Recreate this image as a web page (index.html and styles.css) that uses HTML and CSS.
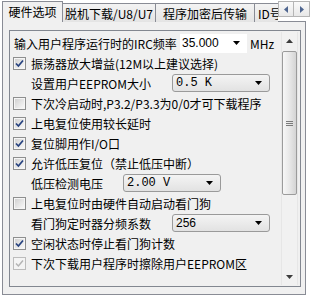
FILE: index.html
```html
<!DOCTYPE html>
<html lang="zh-CN">
<head>
    <meta charset="UTF-8">
    <title>硬件选项</title>
    <link rel="stylesheet" href="styles.css">
</head>
<body>
    <div class="tabstrip">
        <div class="tabs">
            <div class="tab tab-active">硬件选项</div>
            <div class="tab tab-2">脱机下载/U8/U7</div>
            <div class="tab tab-3">程序加密后传输</div>
            <div class="tab tab-4">ID号</div>
        </div>
        <div class="tab-scroll">
            <span class="tab-btn"><svg width="4" height="7" viewBox="0 0 4 7"><path d="M4 0 L0 3.5 L4 7 Z" fill="#4f6690"/></svg></span>
            <span class="tab-btn"><svg width="4" height="7" viewBox="0 0 4 7"><path d="M0 0 L4 3.5 L0 7 Z" fill="#4f6690"/></svg></span>
        </div>
    </div>

    <div class="page">
        <div class="group">
            <div class="options">
                <div class="row">
                    <span class="label-irc">输入用户程序运行时的IRC频率</span>
                    <div class="combo combo-edit">
                        <span class="combo-value">35.000</span>
                        <svg class="combo-arrow" width="7" height="4" viewBox="0 0 7 4"><path d="M0 0 H7 L3.5 4 Z" fill="#000"/></svg>
                    </div>
                    <span class="unit">MHz</span>
                </div>
                <div class="row">
                    <span class="check"><svg width="9" height="9" viewBox="0 0 9 9"><path d="M1 4.5 L3.4 7 L8 1.5" fill="none" stroke="#26427f" stroke-width="1.7"/></svg></span>
                    <span>振荡器放大增益(12M以上建议选择)</span>
                </div>
                <div class="row indent">
                    <span class="field-label">设置用户EEPROM大小</span>
                    <div class="combo combo-list">
                        <span class="combo-value mono">0.5 K</span>
                        <svg class="combo-arrow" width="7" height="4" viewBox="0 0 7 4"><path d="M0 0 H7 L3.5 4 Z" fill="#000"/></svg>
                    </div>
                </div>
                <div class="row">
                    <span class="check"></span>
                    <span>下次冷启动时,P3.2/P3.3为0/0才可下载程序</span>
                </div>
                <div class="row">
                    <span class="check"><svg width="9" height="9" viewBox="0 0 9 9"><path d="M1 4.5 L3.4 7 L8 1.5" fill="none" stroke="#26427f" stroke-width="1.7"/></svg></span>
                    <span>上电复位使用较长延时</span>
                </div>
                <div class="row">
                    <span class="check"><svg width="9" height="9" viewBox="0 0 9 9"><path d="M1 4.5 L3.4 7 L8 1.5" fill="none" stroke="#26427f" stroke-width="1.7"/></svg></span>
                    <span>复位脚用作I/O口</span>
                </div>
                <div class="row">
                    <span class="check"><svg width="9" height="9" viewBox="0 0 9 9"><path d="M1 4.5 L3.4 7 L8 1.5" fill="none" stroke="#26427f" stroke-width="1.7"/></svg></span>
                    <span>允许低压复位（禁止低压中断）</span>
                </div>
                <div class="row indent">
                    <span class="field-label field-short">低压检测电压</span>
                    <div class="combo combo-list">
                        <span class="combo-value mono">2.00 V</span>
                        <svg class="combo-arrow" width="7" height="4" viewBox="0 0 7 4"><path d="M0 0 H7 L3.5 4 Z" fill="#000"/></svg>
                    </div>
                </div>
                <div class="row">
                    <span class="check"></span>
                    <span>上电复位时由硬件自动启动看门狗</span>
                </div>
                <div class="row indent">
                    <span class="field-label">看门狗定时器分频系数</span>
                    <div class="combo combo-list">
                        <span class="combo-value">256</span>
                        <svg class="combo-arrow" width="7" height="4" viewBox="0 0 7 4"><path d="M0 0 H7 L3.5 4 Z" fill="#000"/></svg>
                    </div>
                </div>
                <div class="row">
                    <span class="check"><svg width="9" height="9" viewBox="0 0 9 9"><path d="M1 4.5 L3.4 7 L8 1.5" fill="none" stroke="#26427f" stroke-width="1.7"/></svg></span>
                    <span>空闲状态时停止看门狗计数</span>
                </div>
                <div class="row">
                    <span class="check check-disabled"><svg width="9" height="9" viewBox="0 0 9 9"><path d="M1 4.5 L3.4 7 L8 1.5" fill="none" stroke="#b4b4b4" stroke-width="1.5"/></svg></span>
                    <span>下次下载用户程序时擦除用户EEPROM区</span>
                </div>
            </div>

            <div class="vscroll">
                <div class="vscroll-btn"><svg width="7" height="4" viewBox="0 0 7 4"><path d="M0 4 H7 L3.5 0 Z" fill="#3c3c3c"/></svg></div>
                <div class="vscroll-thumb">
                    <span class="grip"></span>
                    <span class="grip"></span>
                    <span class="grip"></span>
                </div>
                <div class="vscroll-track"></div>
                <div class="vscroll-btn"><svg width="7" height="4" viewBox="0 0 7 4"><path d="M0 0 H7 L3.5 4 Z" fill="#3c3c3c"/></svg></div>
            </div>
        </div>
    </div>
</body>
</html>
```

FILE: styles.css
```css
* {
    box-sizing: border-box;
    margin: 0;
    padding: 0;
}

body {
    font-family: "Noto Sans CJK SC", "Liberation Sans", sans-serif;
    font-size: 12px;
    color: #000;
    background: #fff;
    width: 310px;
    height: 298px;
    overflow: hidden;
}

/* tab header */

.tabstrip {
    display: flex;
    height: 22px;
    background: linear-gradient(#898c95, #898c95) 2px 21px / 304px 1px no-repeat;
}

.tabs {
    display: flex;
    align-items: flex-end;
    flex-shrink: 0;
    width: 278px;
    height: 22px;
    padding-left: 2px;
    overflow: hidden;
}

.tab {
    flex-shrink: 0;
    height: 19px;
    line-height: 17px;
    padding-top: 1px;
    border: 1px solid #898c95;
    border-left: none;
    border-bottom: none;
    background: linear-gradient(#f3f3f3, #e4e4e4);
    white-space: nowrap;
    text-align: center;
}

.tab-active {
    width: 61px;
    height: 21px;
    line-height: 18px;
    border-left: 1px solid #898c95;
    background: #f0f0f0;
}

.tab-2 {
    width: 93px;
}

.tab-3 {
    width: 99px;
}

.tab-4 {
    width: 40px;
    text-align: left;
    padding-left: 3px;
}

.tab-scroll {
    display: flex;
    margin-top: 1px;
    height: 16px;
}

.tab-btn {
    display: flex;
    align-items: center;
    justify-content: center;
    width: 16px;
    height: 16px;
    border: 1px solid #b5b5b5;
    background: linear-gradient(#fafafa, #e8e8e8);
}

.tab-btn + .tab-btn {
    border-left: none;
}

/* page */

.page {
    margin-left: 2px;
    width: 304px;
    height: 273px;
    padding: 8px 4px 0 6px;
    border: 1px solid #898c95;
    border-top: none;
    background: #f0f0f0;
}

.group {
    display: flex;
    height: 257px;
    border: 1px solid #828790;
}

.options {
    flex: 1;
    padding: 2px 0 0 3px;
}

.row {
    display: flex;
    align-items: center;
    height: 20px;
    white-space: nowrap;
}

.indent {
    padding-left: 18px;
}

.label-irc {
    width: 167px;
    padding-left: 1px;
}

.field-label {
    width: 141px;
}

.field-short {
    width: 92px;
}

.unit {
    margin-left: 3px;
}

.check {
    display: flex;
    align-items: center;
    justify-content: center;
    width: 13px;
    height: 13px;
    margin-right: 5px;
    border: 1px solid #8e8f8f;
    padding: 1px;
    background: linear-gradient(135deg, #d2d2d2, #f8f8f8) content-box, #f6f6f6;
}

.check-disabled {
    border-color: #bcbcbc;
    background: #f4f4f4;
}

/* combo boxes */

.combo {
    display: flex;
    align-items: center;
    justify-content: space-between;
    padding: 0 7px 0 3px;
}

.combo-edit {
    width: 67px;
    height: 19px;
    background: #fff;
    padding-left: 2px;
}

.combo-list {
    width: 98px;
    height: 18px;
    border: 1px solid #9a9a9a;
    border-radius: 3px;
    background: linear-gradient(#f4f4f4, #e2e2e2);
}

.combo-value {
    font-family: "Liberation Sans", sans-serif;
    font-size: 12px;
}

.mono {
    font-family: "Liberation Mono", monospace;
}

/* scrollbar */

.vscroll {
    display: flex;
    flex-direction: column;
    width: 17px;
    margin: 1px 2px 1px 0;
    background: #f1f1f1;
    border-left: 1px solid #e6e6e6;
    border-right: 1px solid #e6e6e6;
}

.vscroll-btn {
    display: flex;
    align-items: center;
    justify-content: center;
    height: 17px;
    flex-shrink: 0;
}

.vscroll-thumb {
    display: flex;
    flex-direction: column;
    align-items: center;
    justify-content: center;
    gap: 1px;
    height: 144px;
    margin: 2px 0 0;
    border: 1px solid #9b9b9b;
    border-radius: 2px;
    background: linear-gradient(90deg, #f7f7f7, #e6e6e6 55%, #d4d4d4);
}

.grip {
    width: 7px;
    height: 1px;
    background: #7b7b7b;
}

.vscroll-track {
    flex: 1;
}
```
